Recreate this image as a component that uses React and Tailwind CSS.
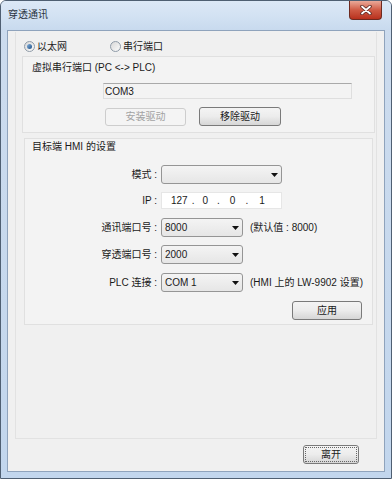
import React from "react";

function Radio({ checked, label, className = "" }) {
  return (
    <div className={"flex items-center gap-[2px] " + className}>
      <span className="w-[11px] h-[11px] rounded-full border border-[#8f9ba8] bg-gradient-to-br from-[#d8d8d8] to-[#fbfbfb] flex items-center justify-center">
        {checked && <span className="w-[5px] h-[5px] rounded-full bg-gradient-to-br from-[#86b2dc] to-[#1d4f87]" />}
      </span>
      <span>{label}</span>
    </div>
  );
}

function Btn({ children, disabled, focus, className = "" }) {
  if (disabled) {
    return (
      <div className={"h-[18px] rounded-[3px] border border-[#cdcdcd] bg-[#f4f4f4] text-[#a3a3a3] flex items-center justify-center " + className}>
        {children}
      </div>
    );
  }
  return (
    <div className={"h-[19px] rounded-[3px] border border-[#7a7a7a] bg-gradient-to-b from-[#f4f4f4] via-[#ececec] to-[#d6d6d6] flex items-center justify-center p-[1px] " + className}>
      <div className={"w-full h-full flex items-center justify-center " + (focus ? "border border-dotted border-[#666]" : "")}>
        {children}
      </div>
    </div>
  );
}

function Combo({ value, className = "" }) {
  return (
    <div className={"h-[19px] rounded-[3px] border border-[#959595] bg-gradient-to-b from-[#f4f4f4] to-[#e6e6e6] flex items-center justify-between pl-[3px] pr-[3px] " + className}>
      <span>{value}</span>
      <svg width="7" height="4" viewBox="0 0 7 4">
        <path d="M0 0h7L3.5 4z" fill="#111" />
      </svg>
    </div>
  );
}

function Row({ label, children, className = "" }) {
  return (
    <div className={"flex items-center whitespace-nowrap " + className}>
      <div className="w-[136px] text-right pr-[4px]">{label}</div>
      {children}
    </div>
  );
}

export default function App() {
  return (
    <div className="w-[392px] h-[479px] flex flex-col bg-gradient-to-b from-[#cddcee] to-[#c2d6ed] border border-[#4f5f72] rounded-t-[6px] overflow-hidden text-[10px] leading-[13px] text-[#1a1a1a] font-['Liberation_Sans','Noto_Sans_CJK_SC',sans-serif]">
      <div className="h-[29px] flex items-start justify-between bg-gradient-to-b from-[#dce8f6] via-[#d3e2f3] to-[#c8daee]">
        <span className="pl-[7px] pt-[7px] text-[#2a3340]">穿透通讯</span>
        <div className="mr-[9px] w-[33px] h-[19px] rounded-b-[4px] border border-t-0 border-[#6d2a20] bg-gradient-to-b from-[#e9a999] via-[#cf5a44] to-[#b8301c] flex items-center justify-center">
          <svg width="12" height="10" viewBox="0 0 12 10">
            <path d="M2 1.5L10 8.5M10 1.5L2 8.5" stroke="#5a2a24" strokeWidth="3.5" strokeLinecap="round" />
            <path d="M2 1.5L10 8.5M10 1.5L2 8.5" stroke="#fff" strokeWidth="1.8" strokeLinecap="round" />
          </svg>
        </div>
      </div>
      <div className="flex-1 mx-[6px] mb-[6px] border border-[#8fa3bc] bg-[#f0f0f0] flex flex-col">
        <div className="mx-[7px] mt-[1px] h-[407px] border-x border-b border-[#e2e2e2] flex flex-col">
          <div className="flex items-center h-[15px] mt-[7px] ml-[8px]">
            <Radio checked label="以太网" />
            <Radio label="串行端口" className="ml-[43px]" />
          </div>
          <div className="mt-[2px] ml-[6px] mr-[1px] h-[77px] border border-[#e0e0e0] bg-[#f3f3f3] flex flex-col">
            <div className="mt-[4px] ml-[9px]">虚拟串行端口 (PC &lt;-&gt; PLC)</div>
            <div className="mt-[9px] ml-[80px] w-[249px] h-[16px] border border-[#dedede] border-t-[#a9a9a9] flex items-center pl-[1px]">
              COM3
            </div>
            <div className="mt-[8px] ml-[82px] flex items-center gap-[13px]">
              <Btn disabled className="w-[81px]">安装驱动</Btn>
              <Btn className="w-[82px]">移除驱动</Btn>
            </div>
          </div>
          <div className="mt-[5px] ml-[8px] mr-[3px] h-[187px] border border-[#e0e0e0] bg-[#f3f3f3] flex flex-col">
            <div className="mt-[1px] ml-[7px]">目标端 HMI 的设置</div>
            <Row label="模式 :" className="mt-[12px]">
              <Combo value="" className="w-[121px]" />
            </Row>
            <Row label="IP :" className="mt-[8px]">
              <div className="w-[121px] h-[17px] bg-white border border-[#e6e6e6] flex items-center">
                <span className="ml-[9px]">127</span>
                <span className="ml-[4px]">.</span>
                <span className="ml-[8px]">0</span>
                <span className="ml-[9px]">.</span>
                <span className="ml-[10px]">0</span>
                <span className="ml-[10px]">.</span>
                <span className="ml-[11px]">1</span>
              </div>
            </Row>
            <Row label="通讯端口号 :" className="mt-[9px]">
              <Combo value="8000" className="w-[82px]" />
              <span className="ml-[7px]">(默认值 : 8000)</span>
            </Row>
            <Row label="穿透端口号 :" className="mt-[8px]">
              <Combo value="2000" className="w-[82px]" />
            </Row>
            <Row label="PLC 连接 :" className="mt-[9px]">
              <Combo value="COM 1" className="w-[82px]" />
              <span className="ml-[7px]">(HMI 上的 LW-9902 设置)</span>
            </Row>
            <div className="mt-[9px] flex justify-end mr-[10px]">
              <Btn className="w-[70px]">应用</Btn>
            </div>
          </div>
        </div>
        <div className="flex justify-end mt-[6px] mr-[25px]">
          <Btn focus className="w-[56px]">离开</Btn>
        </div>
      </div>
    </div>
  );
}
